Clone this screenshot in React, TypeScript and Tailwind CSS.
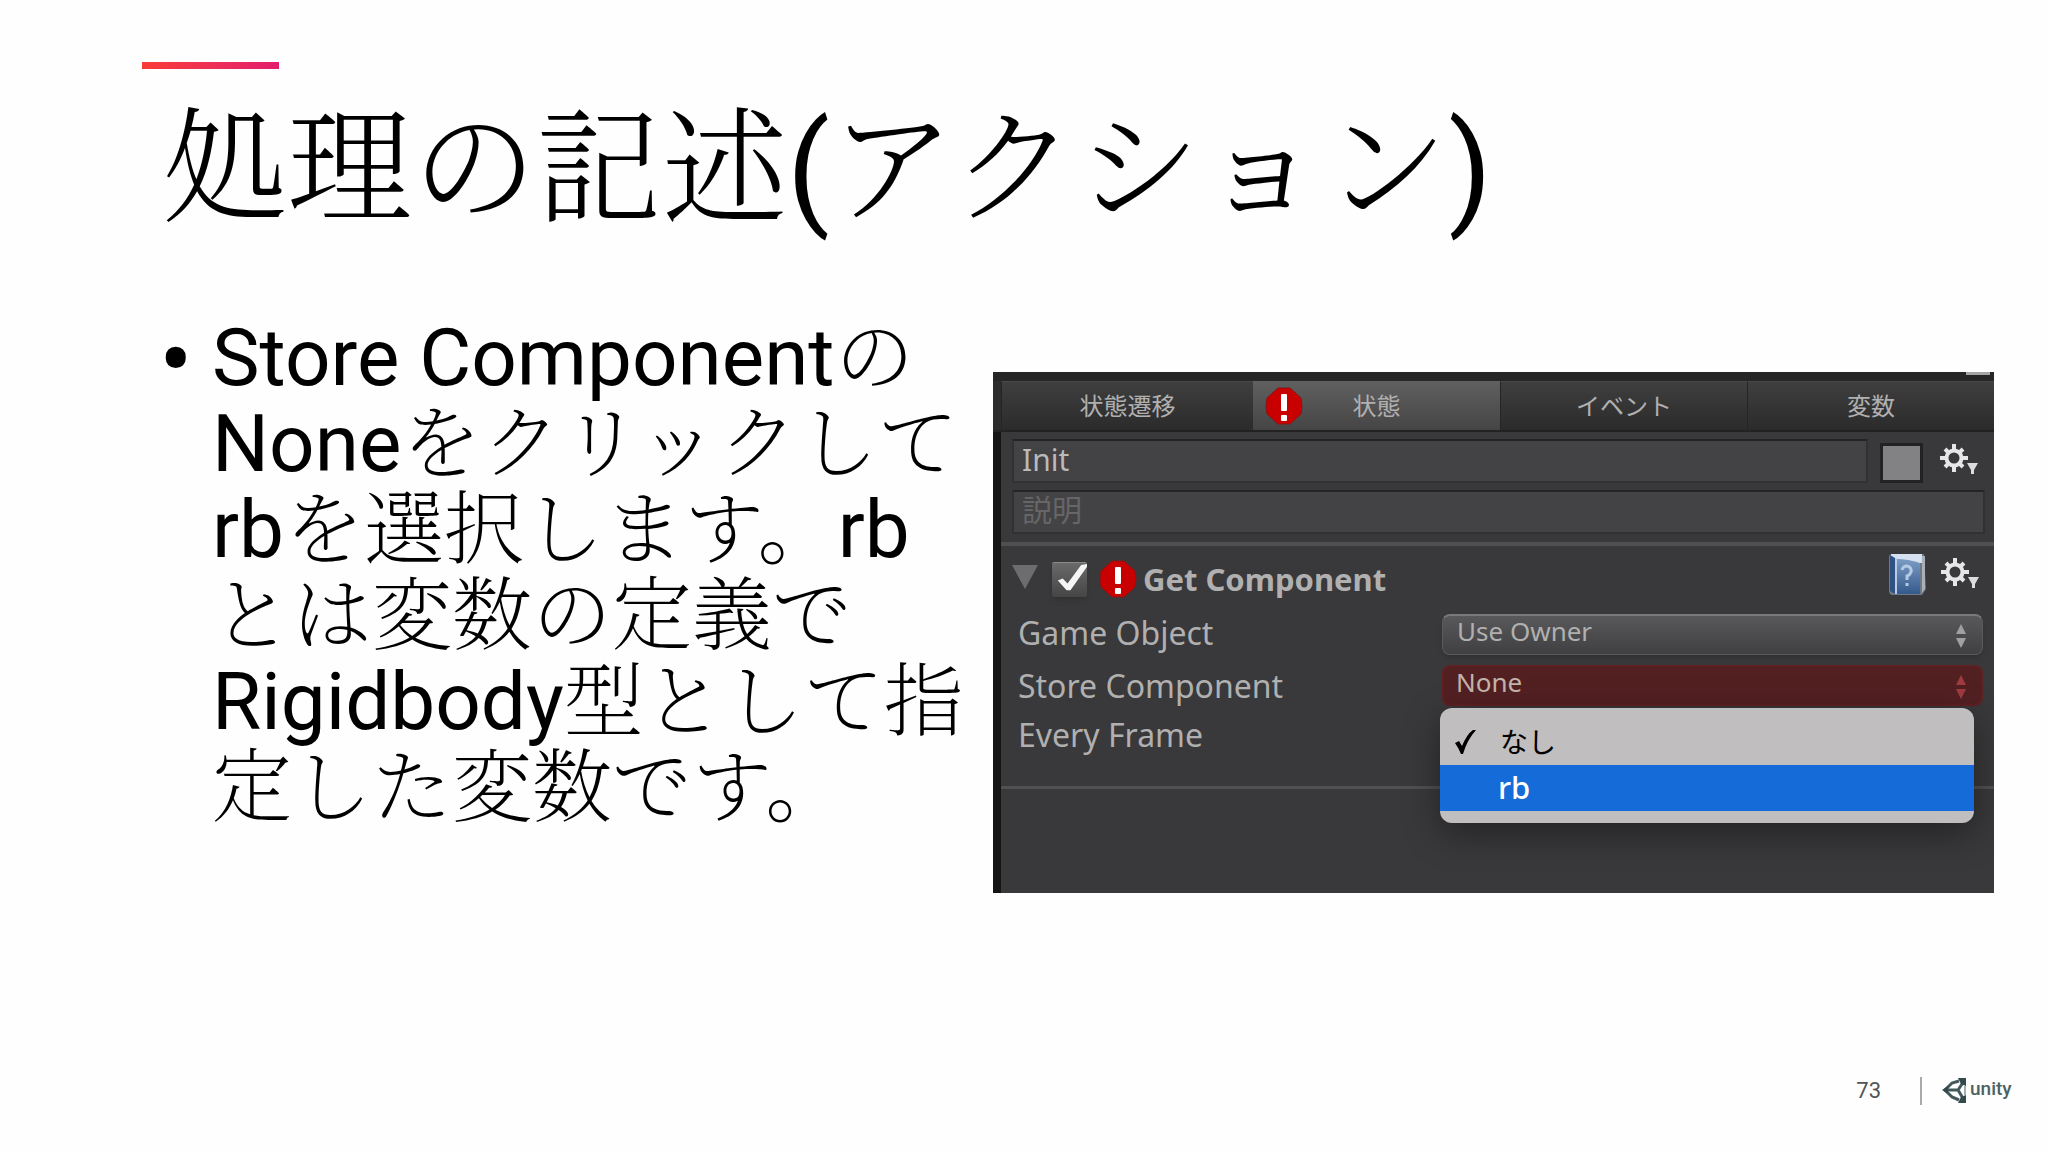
import type { ReactNode } from "react";

const latin = "font-[Roboto,'Noto_Serif_CJK_JP','Noto_Sans_CJK_JP',sans-serif]";

function Ja({ children }: { children: ReactNode }) {
  return (
    <span lang="ja" className="font-extralight">
      {children}
    </span>
  );
}

function ErrorIcon() {
  return (
    <svg viewBox="0 0 38 38" className="size-[38px] shrink-0" aria-label="Error" role="img">
      <path d="M13 1h12l11 10 1 8-1 8-11 10H13L2 27 1 19 2 11z" fill="#c80000" stroke="#8a1414" strokeWidth="1" strokeLinejoin="round" />
      <rect x="16" y="7" width="6" height="17" rx="1" fill="#fff" />
      <rect x="16" y="28" width="6" height="6" rx="1" fill="#fff" />
    </svg>
  );
}

function GearButton() {
  return (
    <button type="button" aria-label="Settings" className="block shrink-0">
      <svg viewBox="0 0 40 34" className="h-[34px] w-10">
        <g transform="translate(15 14)" fill="none" stroke="#e6e6e6">
          <circle r="7.5" strokeWidth="4" />
          <g strokeWidth="4">
            <path d="M0-8V-14M0 8V14M-8 0H-14M8 0H14" />
            <path d="M-6-6L-9-9M6-6L9-9M-6 6L-9 9M6 6L9 9" />
          </g>
        </g>
        <path d="M28 19H39L35 26V30H32V26z" fill="#dcdcdc" />
      </svg>
    </button>
  );
}

function BookIcon() {
  return (
    <svg viewBox="0 0 40 44" className="h-11 w-10">
      <defs>
        <linearGradient id="cover" x1="0" y1="0" x2="0" y2="1">
          <stop offset="0" stopColor="#7c9cc4" />
          <stop offset="1" stopColor="#34598c" />
        </linearGradient>
      </defs>
      <path d="M1 4Q1 1 4 1H36L38 36L34 42H4Q1 41 1 38z" fill="#6f7883" />
      <path d="M3 1H34V10H3z" fill="#d5e1f0" />
      <path d="M2 2L7 5V41L2 38z" fill="#2f5183" />
      <path d="M7 5L9 5V41H7z" fill="#b9cce4" />
      <path d="M9 6Q20 6 32 10V41H9z" fill="url(#cover)" />
      <path d="M34 3L37 3V36L34 40z" fill="#a9b0b9" />
      <path d="M14 17Q15 13 19 13Q24 14 23 19Q22 22 19 23V27M19 30V33" fill="none" stroke="#b4c9e4" strokeWidth="3" />
    </svg>
  );
}

function Arrows({ color }: { color: string }) {
  return (
    <svg viewBox="0 0 12 24" className="pointer-events-none absolute top-2.5 right-4 h-6 w-3">
      <path d="M6 0L11 10H1zM6 24L11 14H1z" fill={color} />
    </svg>
  );
}

function UnityLogo() {
  return (
    <svg viewBox="0 0 70 28" className="h-7 w-[70px]" aria-label="unity" role="img">
      <g fill="none" stroke="#42585a">
        <path d="M3 13L10 6L17 4M3 13L10 20L17 23" strokeWidth="3" />
        <path d="M2 13H16M16 13L22 4M16 13L22 23" strokeWidth="3" />
        <path d="M23 9V18" strokeWidth="2" stroke="#9fb0b0" />
      </g>
      <path d="M0 13L6 9V17zM16 1H24V9L19 7zM16 26H24V18L19 20z" fill="#34494b" />
      <text x="28" y="18" fontFamily="Roboto, sans-serif" fontSize="19" fontWeight="500" fill="#4d6264">
        unity
      </text>
    </svg>
  );
}

const tabs = ["状態遷移", "状態", "イベント", "変数"];

function Inspector() {
  return (
    <section className="flex min-h-[521px] min-w-0 flex-1 flex-col overflow-hidden bg-[#39383a] font-['Noto_Sans','Noto_Sans_CJK_JP',sans-serif] text-[#b0b0b0]">
      <div className="flex h-[9px] justify-end bg-[#262626] pr-1">
        <div className="h-[3px] w-6 bg-[#a5a5a5]" />
      </div>
      <div role="tablist" className="grid h-[51px] grid-cols-[252fr_247fr_247fr_247fr] border-b-2 border-[#222223] bg-[#2c2c2d] pl-2">
        {tabs.map((t, i) => (
          <button
            key={t}
            type="button"
            role="tab"
            aria-selected={i === 1}
            className={
              i === 1
                ? "relative bg-linear-to-b from-[#606060] to-[#454546] text-2xl"
                : "relative border-t border-l border-t-[#484848] border-l-[#252526] bg-linear-to-b from-[#3f3f3f] to-[#2b2b2c] text-2xl"
            }
          >
            {i === 1 && (
              <span className="absolute top-1.5 left-3">
                <ErrorIcon />
              </span>
            )}
            {t}
          </button>
        ))}
      </div>
      <div className="flex flex-1 flex-col border-l-8 border-[#141415]">
        <div className="flex flex-col gap-[7px] border-b-4 border-[#505052] pt-[7px] pr-[9px] pb-2 pl-[11px]">
          <div className="flex items-center">
            <input
              aria-label="状態名"
              defaultValue="Init"
              className="h-11 min-w-0 flex-1 border-2 border-[#313132] border-t-[#242425] bg-[#434244] px-2 pb-1 text-3xl text-[#bababa]"
            />
            <button type="button" aria-label="色" className="mt-1 mr-4 ml-3 h-10 w-[43px] border-3 border-[#222224] bg-[#828183]" />
            <GearButton />
            <span className="w-1.5" />
          </div>
          <input
            aria-label="説明"
            placeholder="説明"
            className="h-11 w-full border-2 border-[#313132] border-t-[#242425] bg-[#434244] px-2 pb-1.5 text-3xl placeholder:text-[#666567]"
          />
        </div>
        <div className="flex flex-col border-b-3 border-[#505052] pb-8">
          <div className="flex h-[66px] items-center pr-3.5 pl-[11px]">
            <button type="button" aria-label="折りたたむ" className="mr-3.5 mb-1 shrink-0">
              <svg viewBox="0 0 26 24" className="h-6 w-[26px]">
                <path d="M0 0H26L13 24z" fill="#6d6c6e" />
              </svg>
            </button>
            <label className="flex items-center text-[31px] font-bold">
              <span className="relative mr-3 block size-[35px]">
                <input
                  type="checkbox"
                  defaultChecked
                  className="block size-[35px] appearance-none rounded-xs border-t border-[#8a8a8a] bg-linear-to-b from-[#6a6a6b] to-[#454546] shadow-md"
                />
                <svg viewBox="0 0 36 36" className="pointer-events-none absolute inset-0">
                  <path d="M6 19L11 17L16 22L30 3L36 2L36 5L19 29H15z" fill="#f5f5f5" />
                </svg>
              </span>
              <ErrorIcon />
              <span className="ml-1.5">Get Component</span>
            </label>
            <button type="button" aria-label="ヘルプ" className="mb-2 ml-auto">
              <BookIcon />
            </button>
            <span className="mb-2 ml-3">
              <GearButton />
            </span>
          </div>
          <div className="flex flex-col gap-2.5 pr-[11px] pl-[17px] text-[32px]">
            <div className="flex h-[41px] items-center">
              <label htmlFor="owner" className="w-[424px]">Game Object</label>
              <div className="relative mt-1 flex-1">
                <select
                  id="owner"
                  className="block h-[41px] w-full appearance-none rounded-lg border border-t-2 border-[#5a595b] border-t-[#79787a] bg-linear-to-b from-[#59585a] to-[#403f41] px-3.5 pb-2 text-[26px] leading-7 shadow-md"
                >
                  <option>Use Owner</option>
                </select>
                <Arrows color="#a0a0a0" />
              </div>
            </div>
            <div className="mt-0.5 flex h-[41px] items-center">
              <label htmlFor="store" className="w-[424px]">Store Component</label>
              <div className="relative flex-1">
                <select
                  id="store"
                  className="block h-[41px] w-full appearance-none rounded-lg border-2 border-[#5f2023] bg-[#532022] px-3 pb-2 text-[26px] leading-7 text-[#c3b5ab]"
                >
                  <option>None</option>
                </select>
                <Arrows color="#a03b40" />
                <ul
                  role="listbox"
                  aria-label="Store Component"
                  className="absolute top-[43px] right-[9px] -left-0.5 z-10 rounded-xl bg-[#c0bebf] pt-3 pb-3 text-black shadow-[0_10px_36px_rgba(0,0,0,0.4)]"
                >
                  <li role="option" aria-selected="true" className="flex h-[45px] items-center gap-6 pb-0.5 pl-3.5 text-[28px]">
                    <svg viewBox="0 0 22 24" className="h-6 w-[22px]">
                      <path d="M1 13L5 11L8 16Q13 4 19 0H22Q13 10 9 24H7Q4 17 1 13z" fill="#000" />
                    </svg>
                    なし
                  </li>
                  <li role="option" aria-selected="false" className="flex h-[46px] items-center bg-[#156bd8] pb-0.5 pl-[58px] text-[31px] font-medium text-white">
                    rb
                  </li>
                </ul>
              </div>
            </div>
            <div className="flex h-[38px] items-center">Every Frame</div>
          </div>
        </div>
      </div>
    </section>
  );
}

export default function App() {
  return (
    <main className={`flex min-h-screen flex-col bg-[#fefefe] text-black ${latin}`}>
      <header className="px-[142px] pt-[62px]">
        <div className="h-[7px] w-[137px] bg-linear-to-r from-[#f93b35] to-[#e31c6b]" />
        <h1 lang="ja" className="mt-7 ml-5 text-[125px] leading-[146px] whitespace-nowrap">
          <span className="font-light">処理の記述</span>(<span className="font-light">アクション</span>)
        </h1>
      </header>
      <div className="mt-[72px] flex items-start pr-[54px] pl-[159px]">
        <ul className="w-[834px] shrink-0 text-[80px] leading-[86px] whitespace-nowrap">
          <li className="flex">
            <span className="w-[53px] text-[100px] leading-[90px]">•</span>
            <p>
              Store Component<Ja>の</Ja>
              <br />
              None<Ja>をクリックして</Ja>
              <br />
              rb<Ja>を選択します。</Ja>rb
              <br />
              <Ja>とは変数の定義で</Ja>
              <br />
              Rigidbody<Ja>型として指</Ja>
              <br />
              <Ja>定した変数です。</Ja>
            </p>
          </li>
        </ul>
        <div className="flex min-w-0 flex-1 pt-[57px]">
          <Inspector />
        </div>
      </div>
      <footer className="mt-auto mb-[45px] flex items-center justify-end pr-9 text-[22px] text-[#555]">
        <span>73</span>
        <span className="mr-5 ml-[39px] h-7 w-0.5 bg-[#aaa]" />
        <UnityLogo />
      </footer>
    </main>
  );
}
